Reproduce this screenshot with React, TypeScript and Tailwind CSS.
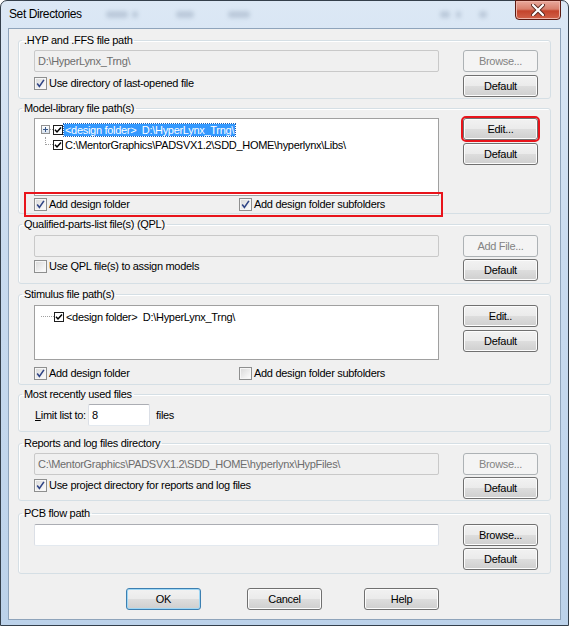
import React from "react";

type BtnProps = {
  label: string;
  disabled?: boolean;
  focus?: boolean;
  marked?: boolean;
  className?: string;
};

const Btn: React.FC<BtnProps> = ({ label, disabled, focus, marked, className }) => {
  let look =
    "border-[#707070] bg-[linear-gradient(#f2f2f2_0%,#ebebeb_48%,#dddddd_52%,#cfcfcf_100%)] text-black shadow-[inset_0_0_0_1px_#fcfcfc]";
  if (disabled) look = "border-[#adb2b5] bg-[#f4f4f4] text-[#838383]";
  if (focus)
    look =
      "border-[#3c7fb1] bg-[linear-gradient(#f2f2f2_0%,#ebebeb_48%,#dddddd_52%,#cfcfcf_100%)] text-black shadow-[inset_0_0_0_1px_#9fd7f5]";
  return (
    <button
      type="button"
      className={`flex h-[22px] w-[75px] items-center justify-center rounded-[3px] border text-[11px] ${look} ${
        marked ? "outline-2 outline-[#e8141b]" : ""
      } ${className ?? ""}`}
    >
      {label}
    </button>
  );
};

const Check: React.FC<{ checked?: boolean }> = ({ checked }) => (
  <span className="flex h-[13px] w-[13px] shrink-0 items-center justify-center border border-[#8e8f8f] bg-[linear-gradient(135deg,#d8d8d8,#ffffff)] shadow-[inset_0_0_0_1px_#f6f6f6]">
    {checked && (
      <svg width="9" height="9" viewBox="0 0 9 9">
        <path d="M1.2 4.6 L3.4 7.4 L7.9 0.9" stroke="#2f4486" strokeWidth="1.6" fill="none" />
      </svg>
    )}
  </span>
);

const CheckRow: React.FC<{ checked?: boolean; label: React.ReactNode; className?: string }> = ({
  checked,
  label,
  className,
}) => (
  <div className={`flex h-[13px] items-center gap-[2px] ${className ?? ""}`}>
    <Check checked={checked} />
    <span className="text-[11px] leading-[13px]">{label}</span>
  </div>
);

const TreeCheck: React.FC = () => (
  <span className="flex h-[10px] w-[10px] shrink-0 items-center justify-center border border-[#1e1e1e] bg-white">
    <svg width="8" height="8" viewBox="0 0 8 8">
      <path d="M1 3.8 L3 6 L7 1.5" stroke="#000" strokeWidth="1.5" fill="none" />
    </svg>
  </span>
);

const Input: React.FC<{ value?: string; disabled?: boolean; className?: string }> = ({
  value,
  disabled,
  className,
}) => (
  <div
    className={`flex h-[22px] items-center rounded-[2px] border px-[3px] text-[11px] ${
      disabled
        ? "border-[#c9c9c9] bg-[#f0f0f0] text-[#6d6d6d]"
        : "border-[#abadb3] border-l-[#dbdfe6] border-r-[#dbdfe6] border-b-[#e3e9ef] bg-white text-black"
    } ${className ?? "w-[405px]"}`}
  >
    {value}
  </div>
);

const Group: React.FC<{ title: string; className?: string; children: React.ReactNode }> = ({
  title,
  className,
  children,
}) => (
  <fieldset
    className={`relative rounded-[3px] border border-[#d5dfe5] shadow-[inset_1px_1px_0_#ffffff] ${className ?? ""}`}
  >
    <legend className="ml-[3px] px-[2px] text-[11px] leading-[13px] text-black">{title}</legend>
    <div className="pl-[15px] pr-[12px]">{children}</div>
  </fieldset>
);

// blurred shapes of the window behind the glass title bar
const Blur: React.FC<{ className: string }> = ({ className }) => (
  <span className={`h-[7px] rounded-[3px] bg-[#8c9db3] opacity-40 blur-[2px] ${className}`} />
);

const App: React.FC = () => {
  return (
    <div className="h-[626px] w-[569px] bg-white font-['Liberation_Sans',Arial,sans-serif] tracking-[-0.3px]">
      <div className="flex h-full flex-col rounded-t-[7px] border border-[#343f4b] bg-[linear-gradient(#dce8f5_0%,#c9dbef_40%,#bcd2ea_100%)] px-[7px] pb-[5px]">
        {/* title bar */}
        <div className="flex h-[27px] shrink-0 items-start">
          <span className="pl-[1px] pt-[6px] text-[12px] leading-[14px] tracking-[-0.4px] text-black">
            Set Directories
          </span>
          <div className="flex flex-1 items-center pt-[10px]">
            <Blur className="ml-[24px] w-[22px]" />
            <Blur className="ml-[4px] w-[6px]" />
            <Blur className="ml-[38px] w-[18px]" />
            <Blur className="ml-[34px] w-[22px]" />
            <Blur className="ml-[190px] w-[10px]" />
            <Blur className="ml-[6px] w-[5px]" />
            <Blur className="ml-[18px] w-[8px]" />
          </div>
          <button
            type="button"
            className="-mt-[1px] flex h-[20px] w-[46px] items-center justify-center rounded-b-[4px] border border-[#5c1b12] bg-[linear-gradient(#e9a99c_0%,#d8806d_45%,#c4442c_55%,#d1624a_100%)] shadow-[inset_0_0_0_1px_#eeb4a8]"
          >
            <svg width="14" height="12" viewBox="0 0 14 12">
              <path d="M2 1 L12 11 M12 1 L2 11" stroke="#5a2a22" strokeWidth="4" strokeLinecap="round" />
              <path d="M2 1 L12 11 M12 1 L2 11" stroke="#ffffff" strokeWidth="2.2" strokeLinecap="round" />
            </svg>
          </button>
        </div>

        {/* client area */}
        <div className="flex flex-1 flex-col border border-[#8fa4bb] bg-[#f0f0f0] pl-[9px] pr-[9px] text-black">
          <Group title=".HYP and .FFS file path" className="mt-[5px] pb-[1px]">
            <div className="flex justify-between pt-[3px]">
              <div className="flex flex-col">
                <Input value="D:\HyperLynx_Trng\" disabled />
                <CheckRow checked label="Use directory of last-opened file" className="mt-[5px]" />
              </div>
              <div className="flex flex-col gap-[3px]">
                <Btn label="Browse..." disabled />
                <Btn label="Default" />
              </div>
            </div>
          </Group>

          <Group title="Model-library file path(s)" className="mt-[3px] pb-[2px]">
            <div className="flex justify-between pt-[3px]">
              <div className="flex flex-col">
                <div className="h-[78px] w-[405px] border border-[#a0a0a0] bg-white pl-[6px] pt-[3px] text-[11px]">
                  <div className="flex h-[15px] items-center">
                    <span className="flex h-[9px] w-[9px] items-center justify-center border border-[#919191] bg-[linear-gradient(#ffffff,#d8e2ee)]">
                      <svg width="5" height="5" viewBox="0 0 5 5">
                        <path d="M0 2.5 H5 M2.5 0 V5" stroke="#3b5a8a" strokeWidth="1" />
                      </svg>
                    </span>
                    <span className="w-[3px] border-t border-dotted border-[#a0a0a0]" />
                    <TreeCheck />
                    <span className="ml-[1px] bg-[#3399ff] px-[1px] leading-[12px] text-white outline-1 outline-dotted outline-[#1a5fb4]">
                      &lt;design folder&gt;&nbsp; D:\HyperLynx_Trng\
                    </span>
                  </div>
                  <div className="flex h-[15px] items-center">
                    <span className="ml-[4px] h-[8px] w-[8px] self-start border-b border-l border-dotted border-[#a0a0a0]" />
                    <TreeCheck />
                    <span className="ml-[2px] leading-[12px]">
                      C:\MentorGraphics\PADSVX1.2\SDD_HOME\hyperlynx\Libs\
                    </span>
                  </div>
                </div>
                <div className="relative mt-[2px]">
                  <div className="flex h-[13px] items-center">
                    <CheckRow checked label="Add design folder" className="w-[205px]" />
                    <CheckRow checked label="Add design folder subfolders" />
                  </div>
                  <span className="absolute -bottom-[6px] -left-[10px] -top-[6px] w-[419px] border-2 border-[#e8141b]" />
                </div>
              </div>
              <div className="flex flex-col gap-[3px]">
                <Btn label="Edit..." marked />
                <Btn label="Default" />
              </div>
            </div>
          </Group>

          <Group title="Qualified-parts-list file(s) (QPL)" className="mt-[4px] pb-[2px]">
            <div className="flex justify-between pt-[4px]">
              <div className="flex flex-col">
                <Input disabled />
                <CheckRow label="Use QPL file(s) to assign models" className="mt-[3px]" />
              </div>
              <div className="flex flex-col gap-[2px]">
                <Btn label="Add File..." disabled />
                <Btn label="Default" />
              </div>
            </div>
          </Group>

          <Group title="Stimulus file path(s)" className="mt-[4px] pb-[4px]">
            <div className="flex justify-between pt-[4px]">
              <div className="flex flex-col">
                <div className="h-[55px] w-[405px] border border-[#a0a0a0] bg-white pl-[6px] pt-[3px] text-[11px]">
                  <div className="flex h-[15px] items-center">
                    <span className="w-[13px] border-t border-dotted border-[#a0a0a0]" />
                    <TreeCheck />
                    <span className="ml-[2px] leading-[12px]">
                      &lt;design folder&gt;&nbsp; D:\HyperLynx_Trng\
                    </span>
                  </div>
                </div>
                <div className="mt-[7px] flex h-[13px] items-center">
                  <CheckRow checked label="Add design folder" className="w-[205px]" />
                  <CheckRow label="Add design folder subfolders" />
                </div>
              </div>
              <div className="flex flex-col gap-[3px]">
                <Btn label="Edit.." />
                <Btn label="Default" />
              </div>
            </div>
          </Group>

          <Group title="Most recently used files" className="mt-[3px] pb-[5px]">
            <div className="flex items-center pt-[3px] text-[11px]">
              <span className="ml-[1px] w-[53px]">
                <span className="underline">L</span>imit list to:
              </span>
              <Input value="8" className="w-[62px]" />
              <span className="ml-[6px]">files</span>
            </div>
          </Group>

          <Group title="Reports and log files directory" className="mt-[5px] pb-[1px]">
            <div className="flex justify-between pt-[3px]">
              <div className="flex flex-col">
                <Input value="C:\MentorGraphics\PADSVX1.2\SDD_HOME\hyperlynx\HypFiles\" disabled />
                <CheckRow checked label="Use project directory for reports and log files" className="mt-[4px]" />
              </div>
              <div className="flex flex-col gap-[2px]">
                <Btn label="Browse..." disabled />
                <Btn label="Default" />
              </div>
            </div>
          </Group>

          <Group title="PCB flow path" className="mt-[6px] pb-[3px]">
            <div className="flex justify-between pt-[4px]">
              <Input />
              <div className="flex flex-col gap-[2px]">
                <Btn label="Browse..." />
                <Btn label="Default" />
              </div>
            </div>
          </Group>

          <div className="mt-[14px] flex gap-[46px] pl-[108px]">
            <Btn label="OK" focus />
            <div className="flex gap-[42px]">
              <Btn label="Cancel" />
              <Btn label="Help" />
            </div>
          </div>
        </div>
      </div>
    </div>
  );
};

export default App;
